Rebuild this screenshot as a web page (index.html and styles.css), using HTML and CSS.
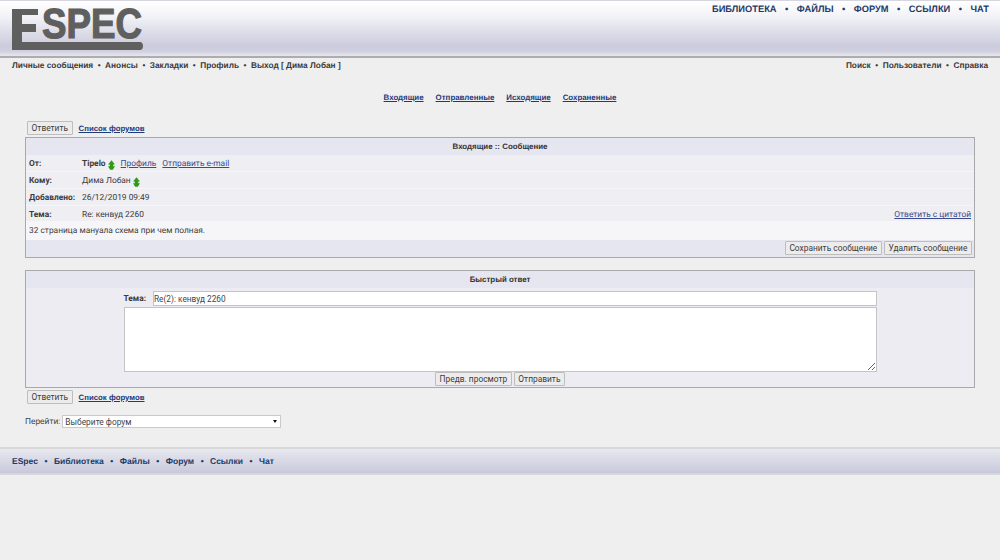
FILE: index.html
```html
<!DOCTYPE html>
<html lang="ru">
<head>
<meta charset="utf-8">
<title>ESpec</title>
<link rel="stylesheet" href="styles.css">
</head>
<body>
<header class="top">
  <svg class="logo" width="150" height="52" viewBox="0 0 150 52">
    <path fill="#5f5f5f" d="M1 2H27V8H11V17H25V25H11V35H129C133 35 133 43 129 43H1Z"/>
    <text class="logo-text" x="31" y="31" textLength="100" lengthAdjust="spacingAndGlyphs">SPEC</text>
  </svg>
  <nav class="main-nav"><a>БИБЛИОТЕКА</a><i>•</i><a>ФАЙЛЫ</a><i>•</i><a>ФОРУМ</a><i>•</i><a>ССЫЛКИ</a><i>•</i><a>ЧАТ</a></nav>
</header>
<div class="sub-nav">
  <div class="sub-group"><a>Личные сообщения</a><i>•</i><a>Анонсы</a><i>•</i><a>Закладки</a><i>•</i><a>Профиль</a><i>•</i><a>Выход [ Дима Лобан ]</a></div>
  <div class="sub-group"><a>Поиск</a><i>•</i><a>Пользователи</a><i>•</i><a>Справка</a></div>
</div>
<div class="folders"><a>Входящие</a><a>Отправленные</a><a>Исходящие</a><a>Сохраненные</a></div>
<div class="actions first"><button class="btn">Ответить</button><a class="forums">Список форумов</a></div>
<section class="panel">
  <div class="title">Входящие :: Сообщение</div>
  <div class="row"><div class="label">От:</div><div class="val"><b>Tipelo</b>
    <svg class="rank" width="7" height="10" viewBox="0 0 8 11"><path fill="#2f9a18" d="M4 0L8 5H6V7H8L5.500 11H2.500L0 7H2V5H0Z"/></svg>
    <a class="link">Профиль</a><a class="link">Отправить e-mail</a></div></div>
  <div class="row"><div class="label">Кому:</div><div class="val">Дима Лобан
    <svg class="rank" width="7" height="10" viewBox="0 0 8 11"><path fill="#2f9a18" d="M4 0L8 5H6V7H8L5.500 11H2.500L0 7H2V5H0Z"/></svg></div></div>
  <div class="row"><div class="label">Добавлено:</div><div class="val">26/12/2019 09:49</div></div>
  <div class="row last"><div class="label">Тема:</div><div class="val grow">Re: кенвуд 2260</div><a class="link quote">Ответить с цитатой</a></div>
  <div class="body">32 страница мануала схема при чем полная.</div>
  <div class="foot"><button class="btn">Сохранить сообщение</button><button class="btn">Удалить сообщение</button></div>
</section>
<section class="panel quick">
  <div class="title">Быстрый ответ</div>
  <div class="form">
    <div class="subject"><b>Тема:</b><input class="field" value="Re(2): кенвуд 2260"></div>
    <textarea class="area"></textarea>
    <div class="send"><button class="btn">Предв. просмотр</button><button class="btn">Отправить</button></div>
  </div>
</section>
<div class="actions second"><button class="btn">Ответить</button><a class="forums">Список форумов</a></div>
<div class="jump"><label>Перейти:</label><div class="sel-wrap"><select class="sel"><option>Выберите форум</option></select></div></div>
<footer class="bottom"><a>ESpec</a><i>•</i><a>Библиотека</a><i>•</i><a>Файлы</a><i>•</i><a>Форум</a><i>•</i><a>Ссылки</a><i>•</i><a>Чат</a></footer>
</body>
</html>
```
FILE: styles.css
```css
* { box-sizing: border-box; }
html, body { margin: 0; height: 560px; overflow: hidden; }
body { background: #efefef; font: 8.400px "Roboto", "Liberation Sans", sans-serif; color: #3c3c3c; text-rendering: geometricPrecision; }
i { font-style: normal; }

.top {
  height: 58px;
  display: flex;
  justify-content: space-between;
  padding: 1px 11px 0 11px;
  background: linear-gradient(#ffffff 0, #f4f4f8 14px, #cbcbdd 45px, #cfcfe0 50px, #ecebf2 56px);
  border-top: 1px solid #d6d6e0;
  border-bottom: 2px solid #adadad;
}
.logo { margin-top: 5px; display: block; }
.logo-text { font: bold 42px "Liberation Sans", sans-serif; fill: #5f5f5f; stroke: #5f5f5f; stroke-width: 1.200px; }
.main-nav { font: bold 9.300px "Liberation Sans", sans-serif; color: #1f3a66; display: flex; padding: 2px 0 0; height: 16px; }
.main-nav i { margin: 0 8.500px; }

.sub-nav {
  display: flex;
  justify-content: space-between;
  padding: 0 12px 0;
  height: 16px;
  font: bold 8.300px/14px "Liberation Sans", sans-serif;
  color: #3a3a3a;
}
.sub-group i { margin: 0 4.500px; }

.folders {
  display: flex;
  justify-content: center;
  gap: 12px;
  margin-top: 17px;
  height: 14px;
  font: bold 7.900px/14px "Liberation Sans", sans-serif;
  color: #1f3a7a;
  text-decoration: underline;
}

.actions { display: flex; align-items: center; gap: 6px; padding-left: 27px; height: 16px; }
.actions.first { margin-top: 15px; margin-bottom: 1px; }
.actions.second { margin-top: 1px; }
.forums { font: bold 7.800px "Liberation Sans", sans-serif; color: #1f3a7a; text-decoration: underline; }

.btn {
  font: 8.400px "Roboto", sans-serif;
  color: #3c3c3c;
  background: #ececec;
  border: 1px solid #bdbdbd;
  border-radius: 1px;
  height: 14px;
  padding: 0 3.600px;
  margin: 0;
  white-space: nowrap;
}

.panel { margin: 0 25px; width: 950px; border: 1px solid #a9a9a9; background: #ececf2; }
.title { height: 17px; background: #e6e6f0; text-align: center; font: bold 7.900px/17px "Liberation Sans", sans-serif; color: #333; }
.quick .title { line-height: 18px; }
.row { display: flex; height: 17px; line-height: 17px; background: #eeeef3; border-bottom: 1px solid #f6f6f9; padding: 1px 3px 0; }
.row.last { height: 16px; }
.label { width: 53px; font: bold 8.400px/16px "Roboto", sans-serif; }
.val { display: flex; align-items: center; gap: 2px; height: 16px; }
.val b { font-weight: 700; }
.grow { flex: 1; }
.rank { margin-top: 2px; }
.link { color: #3a4a8c; text-decoration: underline; margin-left: 4px; line-height: 16px; }
.quote { margin-left: 0; }
.body { height: 18px; line-height: 19px; background: #f6f6f9; padding-left: 3px; }
.foot { height: 17px; background: #e6e6f0; display: flex; justify-content: flex-end; gap: 2px; padding: 1px 2px 0 0; }

.quick { margin-top: 12px; }
.form { height: 99px; display: flex; flex-direction: column; align-items: flex-end; padding-right: 97px; padding-top: 3px; }
.subject { display: flex; align-items: center; gap: 7px; height: 15px; }
.subject b { font-weight: 700; }
.field { width: 724px; height: 15px; border: 1px solid #c4c4c4; background: #fff; padding: 0; font: 8.300px "Roboto", sans-serif; color: #444; outline: 0; }
.area { width: 753px; height: 65px; margin-top: 1px; border: 1px solid #c4c4c4; background: #fff; display: block; }
.send { display: flex; gap: 2px; align-self: flex-start; margin-left: 409px; }

.jump { display: flex; align-items: center; gap: 2px; margin: 10px 0 0 25px; height: 13px; color: #444; }
.sel-wrap { position: relative; width: 219px; height: 13px; }
.sel-wrap::after {
  content: "";
  position: absolute;
  right: 4px;
  top: 5px;
  border: 2.500px solid transparent;
  border-top: 3.500px solid #111;
  border-bottom: 0;
}
.sel { appearance: none; width: 219px; height: 13px; border: 1px solid #c9c9c9; background: #fff; font: 8.400px "Roboto", sans-serif; color: #444; padding: 0 2px; display: block; }

.bottom {
  margin-top: 19px;
  height: 28px;
  border-top: 2px solid #d8d8d8;
  border-bottom: 2px solid #d8d8d8;
  background: linear-gradient(#e8e8f0, #c8c8dc);
  padding-left: 12px;
  display: flex;
  align-items: center;
  font: bold 8.500px "Liberation Sans", sans-serif;
  color: #1f3a66;
}
.bottom i { margin: 0 6.500px; }
```
